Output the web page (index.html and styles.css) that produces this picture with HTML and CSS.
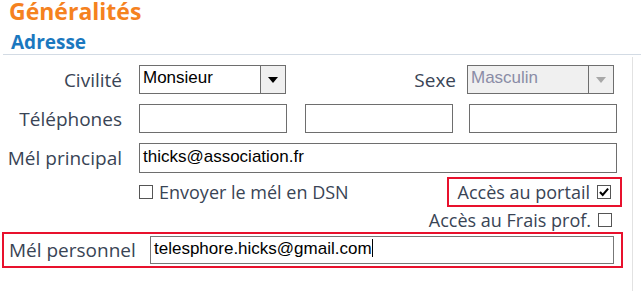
FILE: index.html
```html
<!DOCTYPE html>
<html lang="fr">
<head>
    <meta charset="UTF-8">
    <title>Généralités - Adresse</title>
    <link rel="stylesheet" href="styles.css">
</head>
<body>
    <div class="entete">
        <h1>Généralités</h1>
        <h2>Adresse</h2>
    </div>

    <div class="formulaire">
        <div class="ligne">
            <label class="libelle">Civilité</label>
            <div class="liste">
                <span class="valeur">Monsieur</span>
                <span class="fleche"></span>
            </div>
            <label class="libelle-sexe">Sexe</label>
            <div class="liste desactive">
                <span class="valeur">Masculin</span>
                <span class="fleche"></span>
            </div>
        </div>

        <div class="ligne">
            <label class="libelle">Téléphones</label>
            <div class="champ tel"></div>
            <div class="champ tel tel-2"></div>
            <div class="champ tel"></div>
        </div>

        <div class="ligne ligne-principal">
            <label class="libelle">Mél principal</label>
            <div class="champ large">thicks@association.fr</div>
        </div>

        <div class="ligne ligne-cases">
            <span class="case"></span>
            <span class="texte-case">Envoyer le mél en DSN</span>
            <div class="encadre portail">
                <span class="texte-case">Accès au portail</span>
                <span class="case coche">
                    <svg viewBox="0 0 14 14" width="14" height="14"><path d="M2.3 7 L5.5 10.5 L11.8 3" fill="none" stroke="#000" stroke-width="2.4"/></svg>
                </span>
            </div>
        </div>

        <div class="ligne ligne-frais">
            <span class="texte-case">Accès au Frais prof.</span>
            <span class="case"></span>
        </div>

        <div class="encadre perso">
            <label class="libelle-perso">Mél personnel</label>
            <div class="champ large-perso">telesphore.hicks@gmail.com<span class="curseur"></span></div>
        </div>
    </div>
</body>
</html>
```

FILE: styles.css
```css
body {
    margin: 0;
    background-color: #ffffff;
    font-family: "Open Sans", "Noto Sans", sans-serif;
    color: #394455;
}
.entete {
    border-bottom: 1px solid #d3dbe4;
    margin-left: 3px;
    height: 54px;
}
h1 {
    margin: 0;
    padding-left: 6px;
    font-size: 23px;
    line-height: 22px;
    color: #f5821f;
    font-weight: bold;
}
h2 {
    margin: 0;
    margin-top: 10px;
    padding-left: 8px;
    font-size: 19px;
    line-height: 20px;
    color: #1b78bf;
    font-weight: bold;
}
.formulaire {
    margin-top: 2px;
    width: 633px;
    border-right: 1px solid #e2e2e2;
    height: 235px;
    padding-top: 8px;
    box-sizing: border-box;
}
.ligne {
    display: flex;
    align-items: center;
    height: 29px;
    margin-bottom: 10px;
}
.libelle {
    width: 122px;
    text-align: right;
    font-size: 19px;
    margin-right: 17px;
}
.libelle-sexe {
    font-size: 19px;
    margin-left: auto;
    margin-right: 11px;
}
.liste {
    width: 147px;
    height: 29px;
    border: 1px solid #6e6e6e;
    box-sizing: border-box;
    display: flex;
    background-color: #ffffff;
    font-family: "Liberation Sans", Arial, sans-serif;
    font-size: 17px;
    color: #000;
}
.liste .valeur {
    flex: 1;
    padding: 2px 0 0 3px;
    border-right: 1px solid #6e6e6e;
}
.liste .fleche {
    width: 24px;
    background-color: #f0f0f0;
    display: flex;
    align-items: center;
    justify-content: center;
}
.liste .fleche::after {
    content: "";
    border-left: 5px solid transparent;
    border-right: 5px solid transparent;
    border-top: 6px solid #000;
}
.liste.desactive {
    background-color: #f0f0f0;
    color: #8a8ca6;
    margin-right: 18px;
}
.liste.desactive .fleche::after {
    border-top-color: #a8a8a8;
}
.champ {
    height: 29px;
    border: 1px solid #6e6e6e;
    box-sizing: border-box;
    background-color: #ffffff;
    font-family: "Liberation Sans", Arial, sans-serif;
    font-size: 17px;
    color: #000;
    padding: 3px 0 0 3px;
}
.tel {
    width: 148px;
}
.tel-2 {
    margin: 0 16px 0 18px;
}
.ligne-principal {
    margin-bottom: 5px;
}
.large {
    width: 478px;
    height: 30px;
}
.ligne-cases {
    padding-left: 139px;
    height: 30px;
    margin-bottom: 4px;
}
.case {
    width: 14px;
    height: 14px;
    border: 1px solid #555;
    box-sizing: border-box;
    background: #fff;
    display: inline-flex;
    align-items: center;
    justify-content: center;
    flex-shrink: 0;
}
.case svg {
    display: block;
}
.texte-case {
    font-size: 18px;
    margin-left: 6px;
    white-space: nowrap;
}
.encadre {
    border: 2px solid #e8112d;
    box-sizing: border-box;
}
.portail {
    margin-left: auto;
    margin-right: 10px;
    width: 175px;
    height: 30px;
    display: flex;
    align-items: center;
    justify-content: flex-end;
    padding-right: 9px;
}
.portail .texte-case {
    margin-right: 7px;
}
.ligne-frais {
    justify-content: flex-end;
    height: 18px;
    margin-bottom: 3px;
    padding-right: 20px;
}
.ligne-frais .texte-case {
    margin-right: 7px;
}
.perso {
    margin-left: 2px;
    width: 621px;
    height: 36px;
    display: flex;
    align-items: center;
}
.libelle-perso {
    font-size: 19px;
    margin-left: 5px;
    width: 141px;
}
.large-perso {
    width: 464px;
    height: 28px;
    border-color: #777;
    padding-top: 2px;
}
.curseur {
    display: inline-block;
    width: 1px;
    height: 18px;
    background: #000;
    vertical-align: -3px;
}
```
